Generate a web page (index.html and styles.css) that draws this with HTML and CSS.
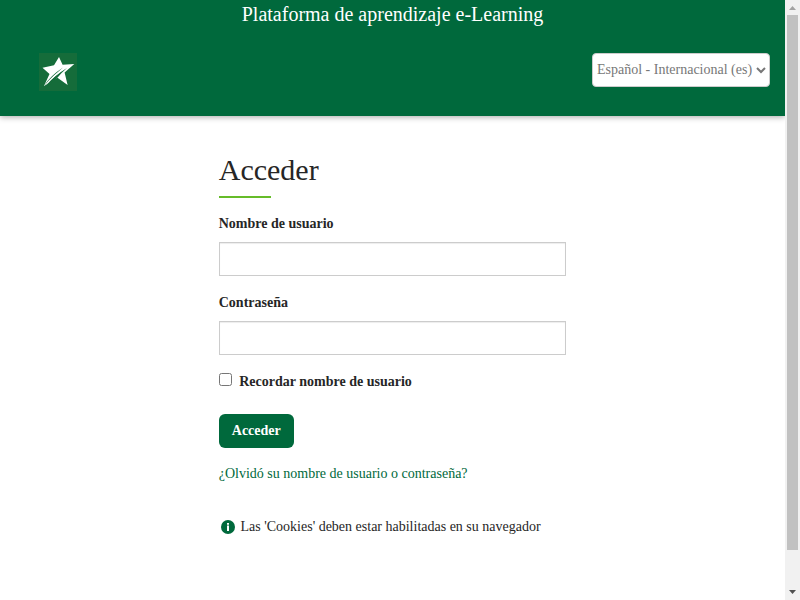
FILE: index.html
```html
<!DOCTYPE html>
<html lang="es">
<head>
<meta charset="utf-8">
<title>Plataforma de aprendizaje e-Learning</title>
<link rel="stylesheet" href="styles.css">
</head>
<body>
<div class="page">
  <header class="header">
    <div class="site-title">Plataforma de aprendizaje e-Learning</div>
    <div class="header-row">
      <svg class="logo" viewBox="0 0 38 38" aria-hidden="true">
        <rect width="38" height="38" fill="#156c3a"/>
        <path fill="#fff" d="M20 4 L23.6 11.8 L35.3 11 L25.6 19.4 L28.6 32 L18.5 24.8 L5 33 L10.5 21 L3.5 14.8 L15 12.3 Z"/>
        <path fill="#156c3a" d="M5 33 Q11 23 24 14.5 Q14 22.5 7 31 Z"/>
        <path fill="#156c3a" d="M8 31.5 Q14 23.5 28 15 Q21.5 20.5 17.5 25.8 L10 32 Z"/>
        <path fill="#fff" d="M5 33 Q13 22.5 26 15 Q16 23 5 33 Z"/>
      </svg>
      <select class="language" aria-label="Idioma"><option>Español - Internacional (es)</option></select>
    </div>
  </header>
  <main class="login">
    <h1>Acceder</h1>
    <form>
      <label class="label" for="user">Nombre de usuario</label>
      <input class="field" id="user" type="text">
      <label class="label" for="pass">Contraseña</label>
      <input class="field" id="pass" type="password">
      <label class="remember"><input type="checkbox"><span>Recordar nombre de usuario</span></label>
      <button class="submit" type="button">Acceder</button>
    </form>
    <a class="forgot" href="#">¿Olvidó su nombre de usuario o contraseña?</a>
    <p class="cookies">
      <svg class="info" viewBox="0 0 14 14" aria-hidden="true"><circle cx="7" cy="7" r="7" fill="#00693c"/><path fill="#fff" d="M6 3h2v1.7H6zM6 5.5h2V11H6z"/></svg>
      <span>Las 'Cookies' deben estar habilitadas en su navegador</span>
    </p>
  </main>
</div>
<div class="scrollbar" aria-hidden="true">
  <svg class="arrow" viewBox="0 0 15 15"><path fill="#a3a3a3" d="M4 10L7.5 6L11 10z"/></svg>
  <div class="thumb"></div>
  <svg class="arrow" viewBox="0 0 15 15"><path fill="#505050" d="M4 5L7.5 9L11 5z"/></svg>
</div>
</body>
</html>
```
FILE: styles.css
```css
* { box-sizing: border-box; }
body {
  margin: 0;
  height: 600px;
  display: flex;
  overflow: hidden;
  background: #fff;
  color: #262626;
  font: 14px/20px "Liberation Serif", serif;
}
.page { flex: 1; }
.header {
  height: 116px;
  background: #00693c;
  box-shadow: 0 1px 6px rgba(0, 0, 0, .35);
}
.site-title {
  height: 53px;
  padding-top: 4px;
  color: #fff;
  font-size: 20px;
  text-align: center;
}
.header-row {
  display: flex;
  justify-content: space-between;
  align-items: flex-start;
  padding: 0 15px 0 39px;
}
.logo { width: 38px; height: 38px; }
.language {
  width: 178px;
  height: 34px;
  padding: 0 0 2px;
  border: 1px solid #ccc;
  border-radius: 4px;
  background: #fff;
  color: #777;
  font: inherit;
}
.login { width: 347.5px; margin: 0 auto; padding-top: 37px; }
h1 {
  margin: 0 0 16px;
  font-size: 30px;
  font-weight: 400;
  line-height: 33px;
}
h1::after {
  content: "";
  display: block;
  width: 52px;
  height: 2px;
  margin-top: 10px;
  background: #66bc29;
}
.label { display: block; margin-bottom: 8px; font-weight: 700; }
.field {
  display: block;
  width: 100%;
  height: 34px;
  margin-bottom: 17px;
  border: 1px solid #ccc;
  background: #fff;
  box-shadow: inset 0 1px 1px rgba(0, 0, 0, .075);
}
.remember { display: flex; font-weight: 700; }
.remember input { width: 13px; height: 13px; margin: 1px 7.5px 0 0; }
.submit {
  display: block;
  width: 75px;
  height: 34px;
  margin-top: 22px;
  padding: 0;
  border: 0;
  border-radius: 6px;
  background: #00693c;
  color: #fff;
  font: inherit;
  font-weight: 700;
}
.forgot { display: block; margin-top: 16px; color: #00693c; text-decoration: none; }
.cookies { display: flex; align-items: center; gap: 5.5px; margin: 33px 0 0 2.25px; }
.info { width: 14px; height: 14px; }
.scrollbar { display: flex; flex-direction: column; width: 15px; height: 600px; background: #f1f1f1; }
.arrow { width: 15px; height: 15px; }
.thumb { width: 11px; height: 535px; margin: 0 2px 35px; background: #c1c1c1; }
```
